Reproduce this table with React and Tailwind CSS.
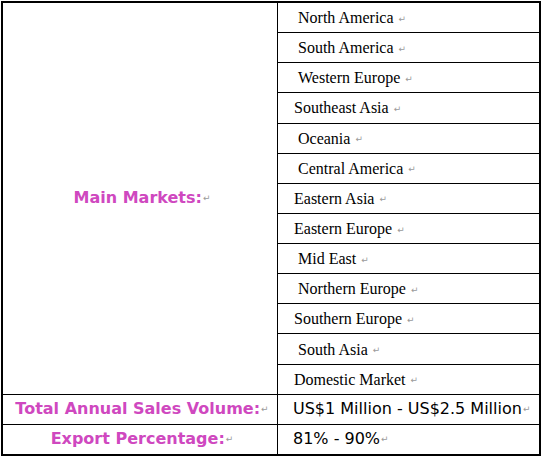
const markets = [
  { name: "North America", indent: true },
  { name: "South America", indent: true },
  { name: "Western Europe", indent: true },
  { name: "Southeast Asia", indent: false },
  { name: "Oceania", indent: true },
  { name: "Central America", indent: true },
  { name: "Eastern Asia", indent: false },
  { name: "Eastern Europe", indent: false },
  { name: "Mid East", indent: true },
  { name: "Northern Europe", indent: true },
  { name: "Southern Europe", indent: false },
  { name: "South Asia", indent: true },
  { name: "Domestic Market", indent: false },
];

const Mark = () => (
  <span className="ml-[1px] text-[9px] text-[#9a9a9a] font-['DejaVu_Sans',sans-serif] font-normal align-middle">
    ↵
  </span>
);

const labelCls =
  "bg-white flex items-center justify-center pl-[4px] text-[16px] font-bold text-[#cf48bf] font-['DejaVu_Sans','Verdana',sans-serif] whitespace-nowrap";

export default function App() {
  return (
    <div className="w-[542px] h-[456px] bg-white pt-[1px] pl-[1px]">
      <div className="w-[540px] h-[455px] border-2 border-black bg-black">
        <div className="grid h-full grid-cols-[274px_1fr] grid-rows-[repeat(15,1fr)] gap-px">
          <div className={`${labelCls} row-span-13`}>
            <span>
              Main Markets:<Mark />
            </span>
          </div>
          {markets.map((m) => (
            <div
              key={m.name}
              className={`bg-white flex items-center pt-[1px] text-[16px] text-black font-['Liberation_Serif',serif] ${
                m.indent ? "pl-[20px]" : "pl-[16px]"
              }`}
            >
              <span>
                {m.name} <Mark />
              </span>
            </div>
          ))}

          <div className={labelCls}>
            <span>
              Total Annual Sales Volume:<Mark />
            </span>
          </div>
          <div className="bg-white flex items-center pl-[15px] text-[16px] text-black font-['DejaVu_Sans',sans-serif] whitespace-nowrap">
            <span>
              US$1 Million - US$2.5 Million<Mark />
            </span>
          </div>

          <div className={labelCls}>
            <span>
              Export Percentage:<Mark />
            </span>
          </div>
          <div className="bg-white flex items-center pl-[15px] text-[16px] text-black font-['DejaVu_Sans',sans-serif]">
            <span>
              81% - 90%<Mark />
            </span>
          </div>
        </div>
      </div>
    </div>
  );
}
